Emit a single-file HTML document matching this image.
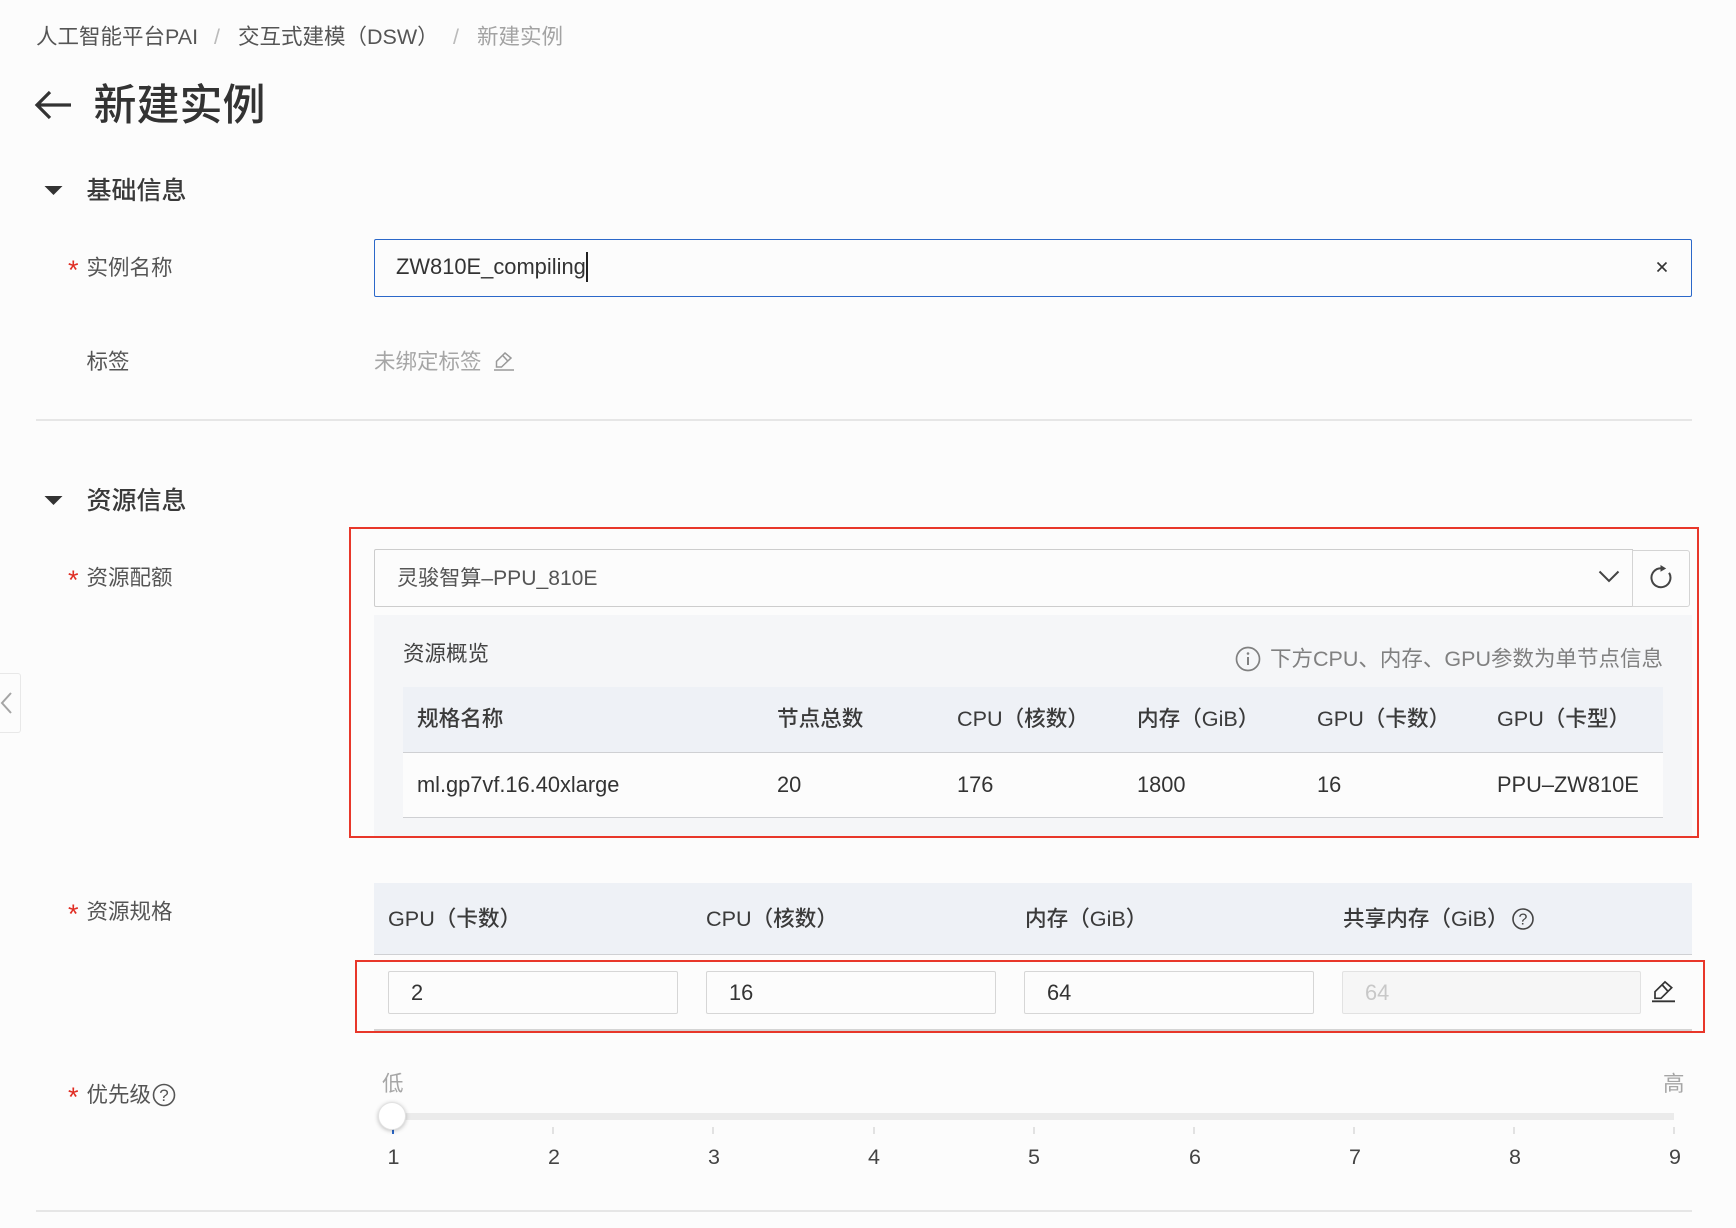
<!DOCTYPE html>
<html lang="zh"><head><meta charset="utf-8"><title>新建实例</title>
<style>
html,body{margin:0;padding:0}
body{width:1736px;height:1228px;position:relative;overflow:hidden;background:#fcfcfc;font-family:"Liberation Sans","Noto Sans CJK SC",sans-serif;font-size:21.5px;color:#555}
.t{position:absolute;line-height:30px;height:30px;white-space:nowrap}
.b{position:absolute;box-sizing:border-box}
svg{position:absolute;overflow:visible}
.star{position:absolute;color:#e02e24;font-size:27px;line-height:30px;height:30px;left:68px}
.h{font-weight:500;color:#3a3a3a;font-size:21.6px}
.d{color:#333;font-size:21.8px}
.n{color:#444;text-align:center;width:30px}
.inp{border:1.5px solid #d6d6d6;border-radius:2px;top:971px;height:43px}
.tick{position:absolute;top:1127px;width:2px;height:7px;background:#e2e2e2}
</style></head><body>

<div class="t" style="left:36px;top:22px;color:#555">人工智能平台PAI</div>
<div class="t" style="left:214px;top:22px;color:#bbb">/</div>
<div class="t" style="left:238px;top:22px;color:#555">交互式建模（DSW）</div>
<div class="t" style="left:453px;top:22px;color:#bbb">/</div>
<div class="t" style="left:477px;top:22px;color:#a3a3a3">新建实例</div>

<svg style="left:0;top:0" width="100" height="130"><path d="M71 105H38M50 92L37 105L50 118" fill="none" stroke="#333" stroke-width="3.2"/></svg>
<div class="t" style="left:93.500px;top:81px;height:50px;line-height:50px;font-size:43px;font-weight:500;color:#333">新建实例</div>

<svg style="left:0;top:0" width="70" height="200"><path d="M44.5 186H62.5L53.5 195Z" fill="#333"/></svg>
<div class="t" style="left:86.500px;top:175.500px;font-size:25px;font-weight:500;color:#3a3a3a">基础信息</div>

<div class="star" style="top:254.500px">*</div>
<div class="t" style="left:86.500px;top:253px">实例名称</div>
<div class="b" style="left:374px;top:239px;width:1318px;height:58px;border:1.5px solid #2b68c9;border-radius:2px"></div>
<div class="t" style="left:396px;top:252px;color:#333;font-size:21.900px">ZW810E_compiling</div>
<div class="b" style="left:586px;top:252px;width:1.5px;height:30px;background:#222"></div>
<svg style="left:1656px;top:261px" width="12" height="12"><path d="M1.5 1.5L10.500 10.500M10.500 1.500L1.500 10.500" stroke="#333" stroke-width="1.600"/></svg>

<div class="t" style="left:86.500px;top:347px">标签</div>
<div class="t" style="left:374px;top:347px;color:#a6a6a6">未绑定标签</div>
<svg style="left:494px;top:352px" width="20" height="20" viewBox="0 0 20 20"><path d="M11 1L17 6L7.500 15H2.500V9.300Z M8.700 3.500L13.900 9.100" fill="none" stroke="#999" stroke-width="1.500"/><path d="M0 18H20" stroke="#999" stroke-width="1.600"/></svg>
<div class="b" style="left:36px;top:419px;width:1656px;height:1.500px;background:#e6e6e6"></div>

<svg style="left:0;top:480px" width="70" height="40"><path d="M44.500 16H62.500L53.500 25Z" fill="#333"/></svg>
<div class="t" style="left:86.500px;top:486px;font-size:25px;font-weight:500;color:#3a3a3a">资源信息</div>

<div class="star" style="top:564.500px">*</div>
<div class="t" style="left:86.500px;top:563px">资源配额</div>
<div class="b" style="left:0;top:673px;width:21px;height:60px;border:1px solid #e8e8e8;border-left:0;border-radius:0 3px 3px 0;background:#fcfcfc"></div>
<svg style="left:0;top:690px" width="14" height="26"><path d="M11 3L2 13L11 23" fill="none" stroke="#a5a5a5" stroke-width="2"/></svg>

<div class="b" style="left:374px;top:549px;width:1259px;height:58px;border:1.500px solid #cdcdcd;border-radius:2px 0 0 2px"></div>
<div class="t" style="left:397px;top:564px;color:#555;font-size:21.100px">灵骏智算–PPU_810E</div>
<svg style="left:1598px;top:568px" width="22" height="16"><path d="M1.500 3.500L11 13L20.500 3.500" fill="none" stroke="#444" stroke-width="2"/></svg>
<div class="b" style="left:1632px;top:550px;width:58px;height:57px;border:1.500px solid #d4d4d4;border-radius:0 3px 3px 0"></div>
<svg style="left:1648px;top:564px" width="26" height="26" viewBox="0 0 26 26"><path d="M21.100 8.800A9.500 9.500 0 1 1 13 4.200" fill="none" stroke="#444" stroke-width="2"/><path d="M12.500 1L18.200 4.500L12.500 7.800Z" fill="#444"/></svg>

<div class="b" style="left:374px;top:615px;width:1318px;height:222px;background:#f5f6f8"></div>
<div class="t" style="left:403px;top:639px;color:#444">资源概览</div>
<svg style="left:1235px;top:646px" width="26" height="26" viewBox="0 0 26 26"><circle cx="13" cy="13" r="11.500" fill="none" stroke="#808080" stroke-width="1.700"/><path d="M13 11V19" stroke="#808080" stroke-width="2"/><circle cx="13" cy="7.500" r="1.300" fill="#808080"/></svg>
<div class="t" style="left:1270px;top:644px;color:#808080">下方CPU、内存、GPU参数为单节点信息</div>

<div class="b" style="left:403px;top:687px;width:1260px;height:66px;background:#eef1f6;border-bottom:1.500px solid #cfd0d3"></div>
<div class="t h" style="left:417px;top:704px">规格名称</div>
<div class="t h" style="left:777px;top:704px">节点总数</div>
<div class="t h" style="left:957px;top:704px">CPU（核数）</div>
<div class="t h" style="left:1137px;top:704px">内存（GiB）</div>
<div class="t h" style="left:1317px;top:704px">GPU（卡数）</div>
<div class="t h" style="left:1497px;top:704px">GPU（卡型）</div>
<div class="b" style="left:403px;top:753px;width:1260px;height:65px;background:#fcfcfc;border-bottom:1.500px solid #cfd0d3"></div>
<div class="t d" style="left:417px;top:770px">ml.gp7vf.16.40xlarge</div>
<div class="t d" style="left:777px;top:770px">20</div>
<div class="t d" style="left:957px;top:770px">176</div>
<div class="t d" style="left:1137px;top:770px">1800</div>
<div class="t d" style="left:1317px;top:770px">16</div>
<div class="t d" style="left:1497px;top:770px">PPU–ZW810E</div>

<div class="b" style="left:349px;top:527px;width:1350px;height:311px;border:2px solid #e8372a"></div>

<div class="star" style="top:898.500px">*</div>
<div class="t" style="left:86.500px;top:897px">资源规格</div>
<div class="b" style="left:374px;top:883px;width:1318px;height:72px;background:#eef1f6;border-bottom:1.500px solid #cfd0d3"></div>
<div class="t h" style="left:388px;top:904px">GPU（卡数）</div>
<div class="t h" style="left:706px;top:904px">CPU（核数）</div>
<div class="t h" style="left:1025px;top:904px">内存（GiB）</div>
<div class="t h" style="left:1343px;top:904px">共享内存（GiB）</div>
<svg style="left:1512px;top:908px" width="22" height="22" viewBox="0 0 22 22"><circle cx="11" cy="11" r="10" fill="none" stroke="#444" stroke-width="1.600"/><text x="11" y="16.500" text-anchor="middle" font-size="16" fill="#444" font-family="Liberation Sans">?</text></svg>

<div class="b inp" style="left:388px;width:290px"></div>
<div class="t d" style="left:411px;top:978px">2</div>
<div class="b inp" style="left:706px;width:290px"></div>
<div class="t d" style="left:729px;top:978px">16</div>
<div class="b inp" style="left:1024px;width:290px"></div>
<div class="t d" style="left:1047px;top:978px">64</div>
<div class="b inp" style="left:1342px;width:299px;background:#f6f6f6;border-color:#e2e2e2"></div>
<div class="t" style="left:1365px;top:978px;color:#c8c8c8;font-size:21.8px">64</div>
<svg style="left:1652px;top:981px" width="24" height="23" viewBox="0 0 24 23"><path d="M13 0.900L19.700 6.700L9 17.300H3V10.700Z M10.300 4L16.300 10.700" fill="none" stroke="#333" stroke-width="1.700"/><path d="M0 20.300H23" stroke="#333" stroke-width="1.800"/></svg>
<div class="b" style="left:374px;top:1029px;width:1318px;height:1.500px;background:#d4d4d4"></div>
<div class="b" style="left:355px;top:960px;width:1350px;height:73px;border:2px solid #e8372a"></div>

<div class="star" style="top:1081.500px">*</div>
<div class="t" style="left:86.500px;top:1080px">优先级</div>
<svg style="left:152px;top:1083px" width="24" height="24" viewBox="0 0 24 24"><circle cx="12" cy="12" r="10.500" fill="none" stroke="#555" stroke-width="1.600"/><text x="12" y="18" text-anchor="middle" font-size="17" fill="#555" font-family="Liberation Sans">?</text></svg>
<div class="t" style="left:382px;top:1069px;color:#a6a6a6">低</div>
<div class="t" style="left:1663px;top:1069px;color:#a6a6a6">高</div>
<div class="b" style="left:392px;top:1113px;width:1282px;height:7px;background:#ebebeb"></div>
<div class="tick" style="left:392px;background:#2b68c9"></div>
<div class="tick" style="left:552px"></div>
<div class="tick" style="left:712px"></div>
<div class="tick" style="left:873px"></div>
<div class="tick" style="left:1033px"></div>
<div class="tick" style="left:1193px"></div>
<div class="tick" style="left:1353px"></div>
<div class="tick" style="left:1513px"></div>
<div class="tick" style="left:1673px"></div>
<div class="b" style="left:378px;top:1102px;width:28px;height:28px;border-radius:50%;background:#fff;border:1px solid #e2e2e2;box-shadow:0 1px 4px rgba(0,0,0,.25)"></div>
<div class="t n" style="left:378.500px;top:1142px">1</div>
<div class="t n" style="left:539px;top:1142px">2</div>
<div class="t n" style="left:699px;top:1142px">3</div>
<div class="t n" style="left:859px;top:1142px">4</div>
<div class="t n" style="left:1019px;top:1142px">5</div>
<div class="t n" style="left:1180px;top:1142px">6</div>
<div class="t n" style="left:1340px;top:1142px">7</div>
<div class="t n" style="left:1500px;top:1142px">8</div>
<div class="t n" style="left:1660px;top:1142px">9</div>
<div class="b" style="left:36px;top:1210px;width:1656px;height:1.500px;background:#e6e6e6"></div>
</body></html>
